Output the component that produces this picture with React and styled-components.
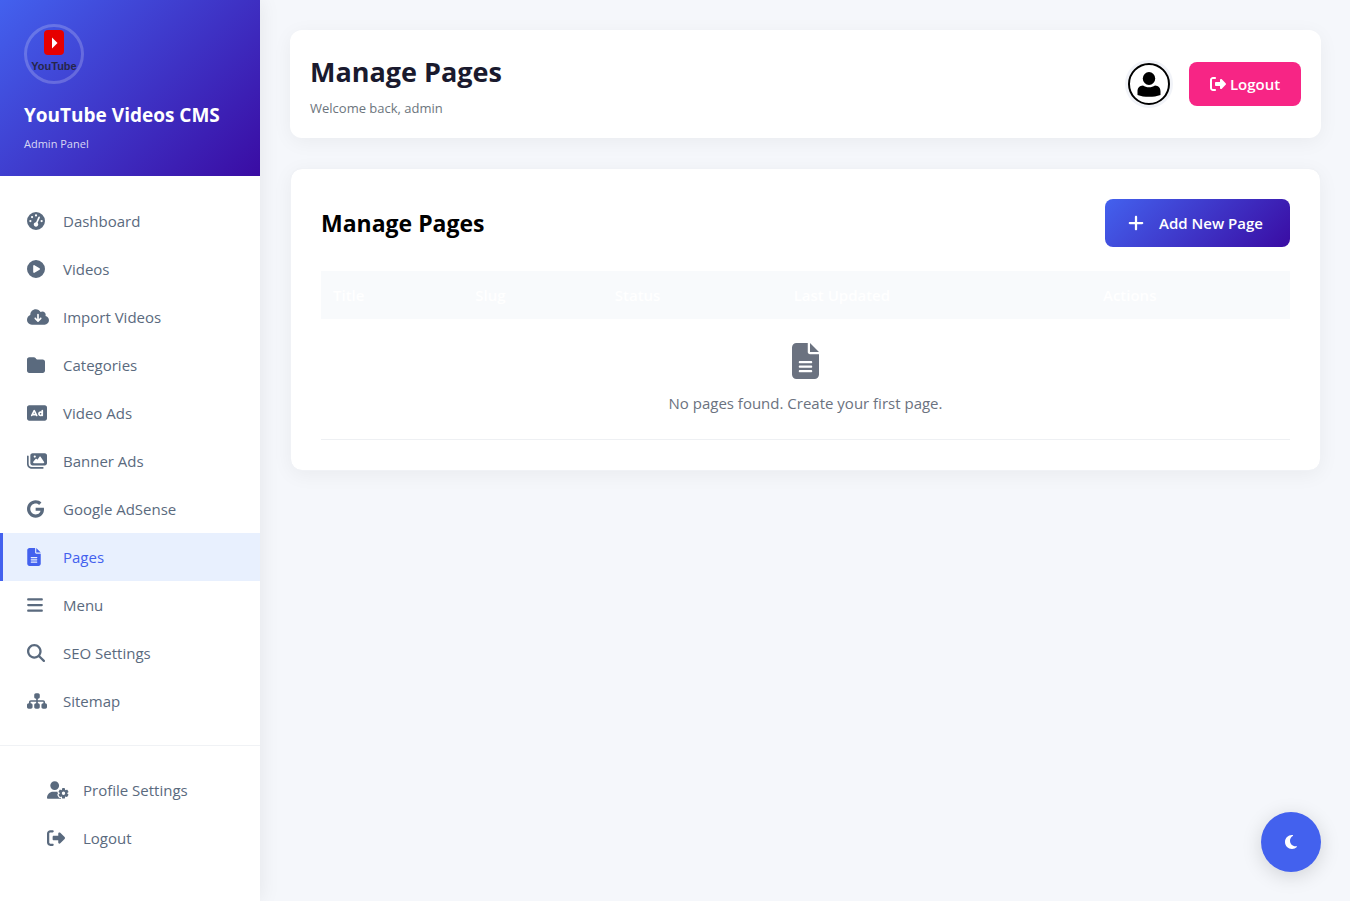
import { useState } from "react";
import styled, { createGlobalStyle } from "styled-components";
import {
  FaBars,
  FaCirclePlay,
  FaCloudArrowDown,
  FaFileLines,
  FaFolder,
  FaGaugeHigh,
  FaGoogle,
  FaImages,
  FaMagnifyingGlass,
  FaMoon,
  FaPlus,
  FaRectangleAd,
  FaRightFromBracket,
  FaSitemap,
  FaUserGear,
} from "react-icons/fa6";

const menuItems = [
  { label: "Dashboard", icon: FaGaugeHigh },
  { label: "Videos", icon: FaCirclePlay },
  { label: "Import Videos", icon: FaCloudArrowDown, iconWidth: 22 },
  { label: "Categories", icon: FaFolder },
  { label: "Video Ads", icon: FaRectangleAd, iconWidth: 20 },
  { label: "Banner Ads", icon: FaImages, iconWidth: 20 },
  { label: "Google AdSense", icon: FaGoogle, iconWidth: 17 },
  { label: "Pages", icon: FaFileLines, iconWidth: 14 },
  { label: "Menu", icon: FaBars, iconWidth: 16 },
  { label: "SEO Settings", icon: FaMagnifyingGlass },
  { label: "Sitemap", icon: FaSitemap, iconWidth: 20 },
];

const accountItems = [
  { label: "Profile Settings", icon: FaUserGear, iconWidth: 22 },
  { label: "Logout", icon: FaRightFromBracket },
];

const columns = ["Title", "Slug", "Status", "Last Updated", "Actions"];

const MenuLink = ({ label, icon: Icon, iconWidth = 18, active, onClick }) => {
  return (
    <NavLink href="#" $active={active} onClick={onClick}>
      <NavIcon $width={iconWidth}>
        <Icon />
      </NavIcon>
      {label}
    </NavLink>
  );
};

const SiteLogo = () => (
  <Logo>
    <svg viewBox="0 0 54 54" width="54" height="54" aria-hidden="true">
      <rect x="17" y="3" width="20" height="25" rx="4" fill="#e60000" />
      <path d="M25 10.500L30.500 16L25 21.500Z" fill="#fff" />
      <text x="27" y="43" textAnchor="middle">
        YouTube
      </text>
    </svg>
  </Logo>
);

const UserAvatar = () => (
  <Avatar>
    <svg viewBox="0 0 42 42" width="42" height="42" aria-hidden="true">
      <circle cx="21" cy="21" r="20" fill="#fff" stroke="#000" strokeWidth="2" />
      <ellipse cx="21" cy="15.500" rx="6.200" ry="6.500" />
      <path d="M9.500 32v-3.500c0-3.800 2-5.800 5.500-6 1.700 1.200 3.600 1.800 6 1.800s4.300-.6 6-1.800c3.500.2 5.500 2.200 5.500 6V32c-3.500 1.400-7.300 1.800-11.500 1.800s-8-.4-11.500-1.800z" />
    </svg>
  </Avatar>
);

const App = () => {
  const [activeItem, setActiveItem] = useState("Pages");
  return (
    <>
      <GlobalStyle />
      <Layout>
        <Sidebar>
          <SidebarHeader>
            <SiteLogo />
            <SiteName>YouTube Videos CMS</SiteName>
            <SiteRole>Admin Panel</SiteRole>
          </SidebarHeader>
          <Nav>
            {menuItems.map((item) => (
              <MenuLink
                key={item.label}
                {...item}
                active={item.label === activeItem}
                onClick={() => setActiveItem(item.label)}
              />
            ))}
          </Nav>
          <SidebarFooter>
            {accountItems.map((item) => (
              <MenuLink key={item.label} {...item} />
            ))}
          </SidebarFooter>
        </Sidebar>
        <Main>
          <TopBar>
            <div>
              <PageTitle>Manage Pages</PageTitle>
              <Welcome>Welcome back, admin</Welcome>
            </div>
            <UserArea>
              <UserAvatar />
              <LogoutButton type="button">
                <FaRightFromBracket />
                Logout
              </LogoutButton>
            </UserArea>
          </TopBar>
          <Card>
            <CardHeader>
              <CardTitle>Manage Pages</CardTitle>
              <AddButton type="button">
                <FaPlus />
                Add New Page
              </AddButton>
            </CardHeader>
            <Table>
              <thead>
                <tr>
                  {columns.map((column) => (
                    <HeadCell key={column}>{column}</HeadCell>
                  ))}
                </tr>
              </thead>
              <tbody>
                <tr>
                  <EmptyCell colSpan={columns.length}>
                    <FaFileLines />
                    <p>No pages found. Create your first page.</p>
                  </EmptyCell>
                </tr>
              </tbody>
            </Table>
          </Card>
        </Main>
      </Layout>
      <ThemeToggle type="button" aria-label="Toggle dark mode">
        <FaMoon />
      </ThemeToggle>
    </>
  );
};

export default App;

const primary = "#4361ee";
const primaryDark = "#3a0ca3";
const gradient = `linear-gradient(135deg, ${primary}, ${primaryDark})`;
const fontStack = `"Segoe UI", "Open Sans", "Noto Sans", sans-serif`;

const GlobalStyle = createGlobalStyle`
  * {
    box-sizing: border-box;
    margin: 0;
    padding: 0;
  }
  body {
    background-color: #f5f7fb;
    color: #000;
    font-family: ${fontStack};
    font-size: 15px;
    line-height: 24px;
  }
  button {
    border: none;
    font-family: inherit;
    cursor: pointer;
  }
`;

const Layout = styled.div`
  display: flex;
  min-height: 100vh;
`;

const Sidebar = styled.aside`
  flex: 0 0 260px;
  background-color: #fff;
  box-shadow: 0 0 20px rgba(0, 0, 0, 0.08);
`;

const SidebarHeader = styled.div`
  padding: 24px;
  background: ${gradient};
  color: #fff;
`;

const Logo = styled.div`
  width: 60px;
  height: 60px;
  margin-bottom: 16px;
  border: 3px solid rgba(255, 255, 255, 0.2);
  border-radius: 50%;

  svg {
    display: block;
  }
  text {
    fill: #26264a;
    font-family: "Liberation Sans Narrow", "Liberation Sans", sans-serif;
    font-size: 11px;
    font-weight: bold;
  }
`;

const SiteName = styled.h3`
  font-size: 19px;
  font-weight: 700;
  line-height: 30px;
  white-space: nowrap;
`;

const SiteRole = styled.p`
  margin-top: 6px;
  color: rgba(255, 255, 255, 0.8);
  font-size: 11px;
  line-height: 16px;
`;

const Nav = styled.nav`
  padding: 21px 0 20px;
`;

const SidebarFooter = styled.div`
  padding: 20px;
  border-top: 1px solid #f0f2f5;
`;

const NavLink = styled.a`
  display: flex;
  align-items: center;
  gap: 12px;
  height: 48px;
  padding: 0 24px;
  border-left: 3px solid ${({ $active }) => ($active ? primary : "transparent")};
  background-color: ${({ $active }) => ($active ? "#e8f0fe" : "transparent")};
  color: ${({ $active }) => ($active ? primary : "#5a6a7e")};
  text-decoration: none;
  white-space: nowrap;
`;

const NavIcon = styled.span`
  display: flex;
  flex: 0 0 24px;

  svg {
    width: ${({ $width }) => $width}px;
    height: 18px;
  }
`;

const Main = styled.main`
  flex: 1;
  min-width: 0;
  padding: 30px 29px 30px 30px;
`;

const TopBar = styled.header`
  display: flex;
  align-items: center;
  justify-content: space-between;
  margin-bottom: 30px;
  padding: 20px;
  border-radius: 12px;
  background-color: #fff;
  box-shadow: 0 4px 20px rgba(0, 0, 0, 0.05);
`;

const PageTitle = styled.h1`
  margin-bottom: 4px;
  color: #1a1a2e;
  font-size: 27px;
  font-weight: 700;
  line-height: 44px;
`;

const Welcome = styled.p`
  color: #6c757d;
  font-size: 13px;
  line-height: 20px;
`;

const UserArea = styled.div`
  display: flex;
  align-items: center;
  gap: 16px;
`;

const Avatar = styled.div`
  width: 48px;
  height: 48px;
  border: 3px solid #f1f3f8;
  border-radius: 50%;

  svg {
    display: block;
  }
`;

const LogoutButton = styled.button`
  display: flex;
  align-items: center;
  justify-content: center;
  gap: 4px;
  width: 112px;
  height: 44px;
  border-radius: 8px;
  background-color: #f72585;
  color: #fff;
  font-size: 15px;
  font-weight: 600;

  svg {
    width: 16px;
    height: 16px;
  }
`;

const Card = styled.section`
  padding: 30px;
  border: 1px solid #f0f2f6;
  border-radius: 12px;
  background-color: #fff;
  background-clip: padding-box;
  box-shadow: 0 4px 20px rgba(0, 0, 0, 0.05);
`;

const CardHeader = styled.div`
  display: flex;
  align-items: center;
  justify-content: space-between;
  margin-bottom: 24px;
`;

const CardTitle = styled.h2`
  font-size: 23px;
  font-weight: 700;
  line-height: 36px;
`;

const AddButton = styled.button`
  display: flex;
  align-items: center;
  gap: 14px;
  width: 185px;
  height: 48px;
  padding: 0 22px;
  border-radius: 8px;
  background: ${gradient};
  color: #fff;
  font-size: 15px;
  font-weight: 600;
  white-space: nowrap;

  svg {
    flex: none;
    width: 18px;
    height: 18px;
  }
`;

const Table = styled.table`
  width: 100%;
  border-collapse: collapse;
`;

const HeadCell = styled.th`
  height: 48px;
  padding: 0 12px;
  background-color: #f8fafc;
  color: #fff;
  font-weight: 600;
  text-align: left;
`;

const EmptyCell = styled.td`
  padding: 24px 12px;
  border-bottom: 1px solid #eef0f3;
  color: #6b7280;
  text-align: center;

  svg {
    display: block;
    width: 27px;
    height: 36px;
    margin: 0 auto 12px;
  }
`;

const ThemeToggle = styled.button`
  position: fixed;
  right: 29px;
  bottom: 29px;
  display: flex;
  align-items: center;
  justify-content: center;
  width: 60px;
  height: 60px;
  border-radius: 50%;
  background-color: ${primary};
  box-shadow: 0 4px 20px rgba(0, 0, 0, 0.15);
  color: #fff;

  svg {
    width: 16px;
    height: 16px;
  }
`;
